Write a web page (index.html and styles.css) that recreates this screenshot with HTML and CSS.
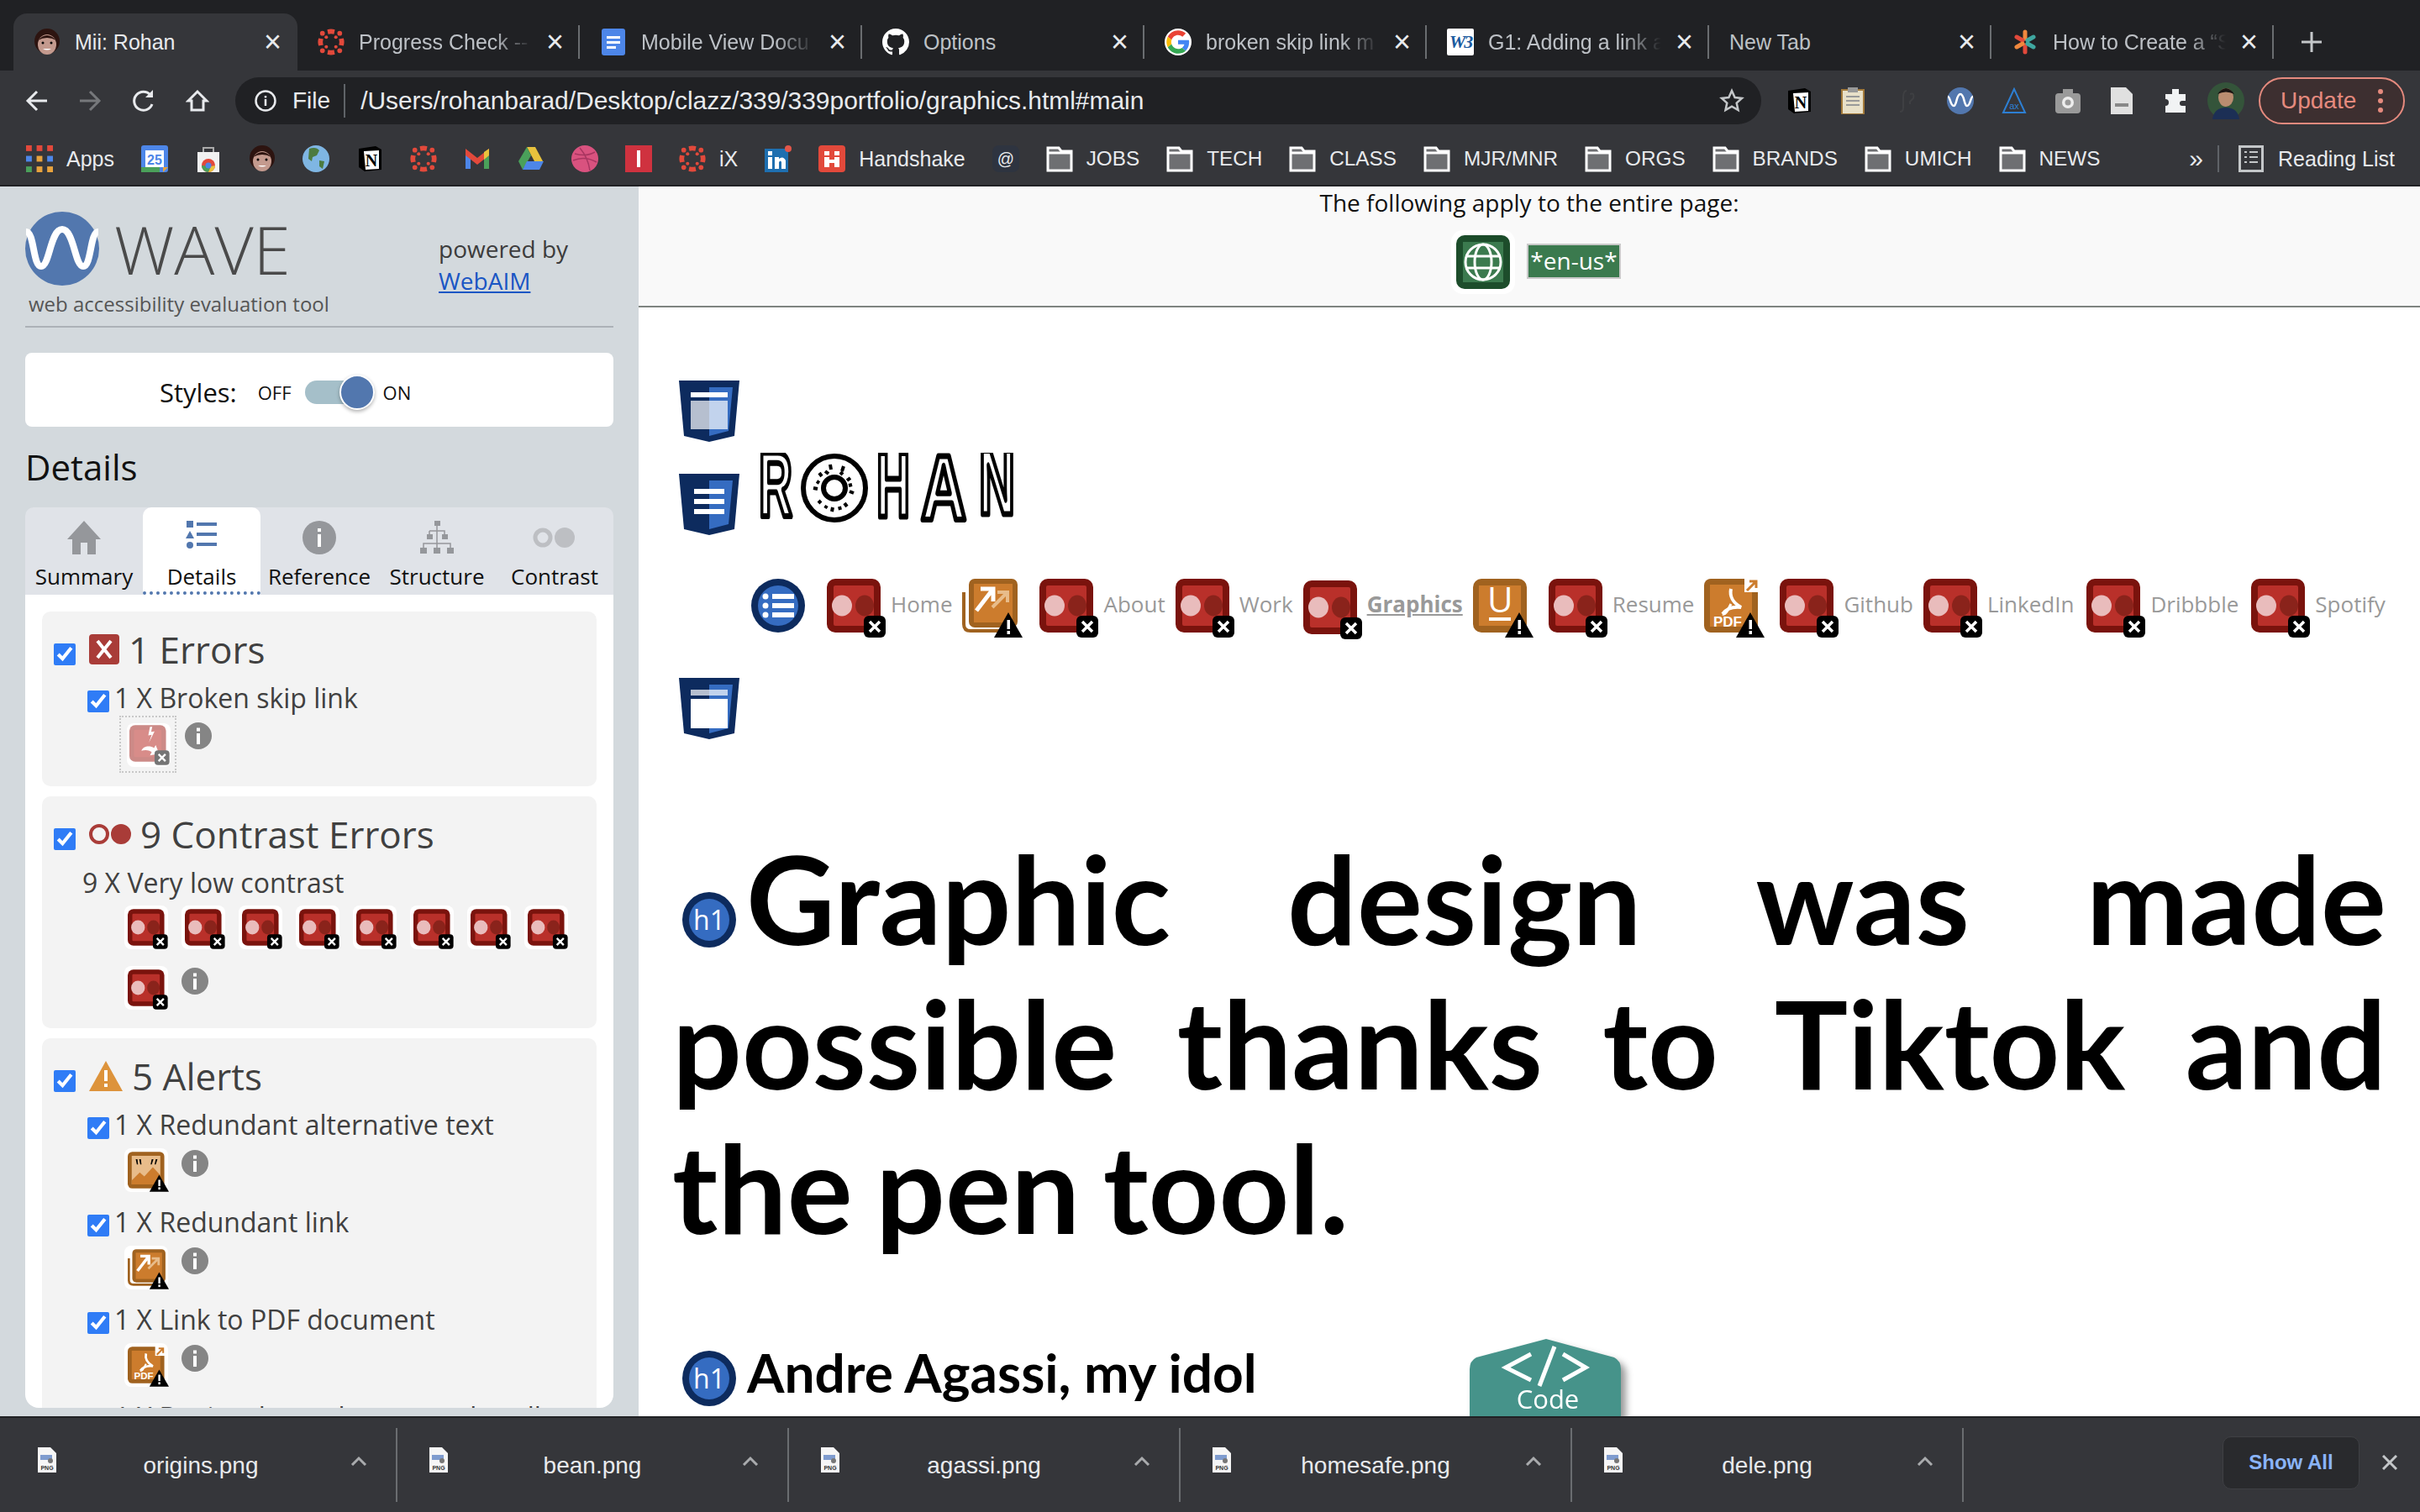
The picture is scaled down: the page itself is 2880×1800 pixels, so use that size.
FILE: index.html
```html
<!DOCTYPE html>
<html lang="en">
<head>
    <meta charset="UTF-8">
    <title>Mii: Rohan</title>
    <link rel="stylesheet" href="styles.css">
</head>
<body>
<svg class="defs" width="0" height="0">
    <defs>
        <g id="b-x"><rect x="44" y="44" width="26" height="26" rx="6" fill="#000"/><path d="M51 51l12 12M63 51L51 63" stroke="#fff" stroke-width="3.5"/></g>
        <g id="b-warn"><path d="M55 40l17 30H38z" fill="#000"/><rect x="53.500" y="49" width="3.500" height="11" fill="#fff"/><rect x="53.500" y="62" width="3.500" height="4" fill="#fff"/></g>
        <symbol id="i-contrast" viewBox="0 0 72 70">
            <rect width="64" height="64" rx="10" fill="#7a130d"/><rect x="8" y="8" width="48" height="48" rx="2" fill="#b9302a"/>
            <ellipse cx="18" cy="32" rx="12" ry="12.500" fill="#e9bcbc"/><ellipse cx="45" cy="32" rx="11" ry="12.500" fill="#8a231b"/>
            <use href="#b-x"/>
        </symbol>
        <symbol id="i-broken" viewBox="0 0 72 70">
            <g opacity=".55"><rect width="64" height="64" rx="10" fill="#a32b26"/><rect x="8" y="8" width="48" height="48" rx="2" fill="#b9302a"/></g>
            <path d="M52 50L36 53l3-6c-6-4-12-4-18-2 3-8 14-10 22-5l3-5z" fill="#fff"/><path d="M36 3l-3 15 6-1-5 14 10-20-6 1 2-9z" fill="#fff"/>
            <rect x="44" y="44" width="26" height="26" rx="6" fill="#757575"/><path d="M51 51l12 12M63 51L51 63" stroke="#fff" stroke-width="3.500"/>
        </symbol>
        <symbol id="i-redundant" viewBox="0 0 72 70">
            <path d="M2 16v38q0 8 8 8h40" fill="none" stroke="#a0621f" stroke-width="4"/>
            <rect x="8" width="58" height="58" rx="7" fill="#a0621f"/><rect x="14" y="6" width="46" height="46" fill="#cc7c2d"/>
            <path d="M36 34l18-18M42 16h12v12" fill="none" stroke="#e8bc8a" stroke-width="4"/>
            <path d="M17 38l20-26M22 12h15v15" fill="none" stroke="#fff" stroke-width="5"/>
            <use href="#b-warn"/>
        </symbol>
        <symbol id="i-alt" viewBox="0 0 72 70">
            <rect width="64" height="64" rx="8" fill="#a0621f"/><rect x="7" y="7" width="50" height="50" fill="#e8bc8a"/>
            <path d="M7 50l14-14 8 7 15-16 13 14v16H7z" fill="#cc7c2d"/>
            <path d="M14 13l2 9 2 0-1-9zm6 0l2 9 2 0-1-9zm22 0l-2 9 2 0 3-9zm7 0l-2 9 2 0 3-9z" fill="#000"/>
            <use href="#b-warn"/>
        </symbol>
        <symbol id="i-pdf" viewBox="0 0 72 70">
            <rect width="64" height="64" rx="8" fill="#a0621f"/><rect x="7" y="7" width="50" height="50" fill="#cc7c2d"/>
            <path d="M32 12c-2 9 3 17 12 22-9-1-17 1-22 8" fill="none" stroke="#fff" stroke-width="4"/><path d="M22 42c3 1 5-2 10-12" fill="none" stroke="#fff" stroke-width="3"/>
            <text class="icon-pdf" x="11" y="57">PDF</text>
            <rect x="48" y="-2" width="18" height="18" fill="#fff"/><path d="M51 14l11-11M54 3h8v8" fill="none" stroke="#cc7c2d" stroke-width="3"/>
            <use href="#b-warn"/>
        </symbol>
        <symbol id="i-u" viewBox="0 0 72 70">
            <rect width="64" height="64" rx="10" fill="#a0621f"/><rect x="7" y="8" width="50" height="48" fill="#cc7c2d"/>
            <text class="icon-u" x="17" y="40">U</text><rect x="19" y="46" width="26" height="4" fill="#fff"/>
            <use href="#b-warn"/>
        </symbol>
        <symbol id="i-lang" viewBox="0 0 64 64">
            <rect width="64" height="64" rx="10" fill="#1d4d2b"/><rect x="8" y="8" width="48" height="48" fill="#3b7a4e"/>
            <g fill="none" stroke="#fff" stroke-width="3"><circle cx="32" cy="32" r="21"/><ellipse cx="32" cy="32" rx="10" ry="21"/><path d="M11 25h42M11 39h42"/></g>
        </symbol>
        <symbol id="i-list" viewBox="0 0 64 64">
            <circle cx="32" cy="32" r="32" fill="#0d2b5e"/><circle cx="32" cy="32" r="24" fill="#356cc1"/>
            <path d="M25 18h26v6H25zM25 29h26v6H25zM25 40h26v6H25z" fill="#fff"/><circle cx="17" cy="21" r="3.500" fill="#fff"/><circle cx="17" cy="32" r="3.500" fill="#fff"/><circle cx="17" cy="43" r="3.500" fill="#fff"/>
        </symbol>
        <symbol id="i-h1" viewBox="0 0 64 66">
            <ellipse cx="32" cy="33" rx="32" ry="33" fill="#0d2b5e"/><ellipse cx="32" cy="33" rx="24" ry="25" fill="#356cc1"/>
            <text class="icon-h1" x="32" y="45">h1</text>
        </symbol>
        <g id="shield"><path d="M0 0h72l-6 66-30 7-30-7z" fill="#0d2b5e"/><path d="M36 8h28l-5 52-23 6z" fill="#356cc1"/></g>
        <symbol id="i-header" viewBox="0 0 72 73"><use href="#shield"/><rect x="14" y="14" width="44" height="6" fill="#fff"/><rect x="14" y="24" width="44" height="34" fill="#fff" opacity=".7"/></symbol>
        <symbol id="i-nav" viewBox="0 0 72 73"><use href="#shield"/><path d="M18 18h36v6H18zM18 30h36v6H18zM18 42h36v6H18z" fill="#fff"/></symbol>
        <symbol id="i-main" viewBox="0 0 72 73"><use href="#shield"/><rect x="14" y="14" width="44" height="7" fill="#fff" opacity=".7"/><rect x="14" y="25" width="44" height="35" fill="#fff"/></symbol>
        <symbol id="i-info" viewBox="0 0 32 32"><circle cx="16" cy="16" r="16" fill="#858585"/><rect x="14" y="13" width="4" height="13" fill="#fff"/><rect x="14" y="6.500" width="4" height="4" fill="#fff"/></symbol>
        <symbol id="i-mii" viewBox="0 0 32 32"><ellipse cx="16" cy="15" rx="15" ry="15" fill="#2d1410"/><ellipse cx="16" cy="19" rx="11" ry="12" fill="#c49a8e"/><path d="M5 14q11-12 22 0-11-6-22 0z" fill="#2d1410"/><circle cx="11" cy="17" r="1.500" fill="#000"/><circle cx="21" cy="17" r="1.500" fill="#000"/><path d="M11 24q5 3 10 0z" fill="#fff"/></symbol>
        <symbol id="i-canvas" viewBox="2 2 28 28"><g fill="#e2493b"><path d="M12 3a13 13 0 0 1 8 0l-1 5a8 8 0 0 0-6 0zM12 29a13 13 0 0 0 8 0l-1-5a8 8 0 0 1-6 0zM3 12a13 13 0 0 0 0 8l5-1a8 8 0 0 1 0-6zM29 12a13 13 0 0 1 0 8l-5-1a8 8 0 0 0 0-6z"/><circle cx="7" cy="7" r="2.500"/><circle cx="25" cy="7" r="2.500"/><circle cx="7" cy="25" r="2.500"/><circle cx="25" cy="25" r="2.500"/><circle cx="11" cy="11" r="1.800"/><circle cx="21" cy="11" r="1.800"/><circle cx="11" cy="21" r="1.800"/><circle cx="21" cy="21" r="1.800"/></g></symbol>
        <symbol id="i-docs" viewBox="0 0 32 32"><rect x="2" width="28" height="32" rx="3" fill="#4d86e8"/><path d="M8 9h16v3H8zM8 15h16v3H8zM8 21h11v3H8z" fill="#fff"/></symbol>
        <symbol id="i-github" viewBox="0 0 16 16"><path fill="#fff" d="M8 0C3.580 0 0 3.580 0 8c0 3.540 2.290 6.530 5.470 7.590.4.070.55-.17.55-.38 0-.19-.01-.82-.01-1.490-2.010.37-2.530-.49-2.690-.94-.09-.23-.48-.94-.82-1.130-.28-.15-.68-.52-.01-.53.63-.01 1.080.58 1.230.82.720 1.210 1.870.87 2.330.66.070-.52.280-.87.510-1.070-1.780-.2-3.640-.89-3.640-3.950 0-.87.310-1.590.82-2.150-.08-.2-.36-1.020.08-2.120 0 0 .67-.21 2.200.82.640-.18 1.320-.27 2-.27.680 0 1.360.09 2 .27 1.530-1.040 2.200-.82 2.200-.82.44 1.100.16 1.920.08 2.120.51.56.82 1.270.82 2.150 0 3.070-1.870 3.750-3.650 3.950.29.25.54.73.54 1.480 0 1.070-.01 1.930-.01 2.200 0 .21.15.46.55.38A8.013 8.013 0 0016 8c0-4.420-3.580-8-8-8z"/></symbol>
        <symbol id="i-google" viewBox="-4 -4 56 56"><circle cx="24" cy="24" r="28" fill="#fff"/><path fill="#EA4335" d="M24 9.500c3.540 0 6.710 1.220 9.210 3.600l6.850-6.850C35.900 2.380 30.470 0 24 0 14.620 0 6.510 5.380 2.560 13.220l7.980 6.190C12.430 13.720 17.740 9.500 24 9.500z"/><path fill="#4285F4" d="M46.980 24.550c0-1.570-.15-3.090-.38-4.550H24v9.020h12.940c-.58 2.960-2.260 5.480-4.780 7.180l7.730 6c4.510-4.180 7.090-10.360 7.090-17.650z"/><path fill="#FBBC05" d="M10.530 28.590c-.48-1.450-.76-2.990-.76-4.590s.27-3.140.76-4.590l-7.980-6.190C.92 16.460 0 20.120 0 24c0 3.880.92 7.540 2.560 10.780l7.970-6.190z"/><path fill="#34A853" d="M24 48c6.480 0 11.930-2.130 15.890-5.810l-7.730-6c-2.150 1.450-4.920 2.300-8.160 2.300-6.260 0-11.570-4.220-13.470-9.910l-7.980 6.190C6.510 42.620 14.620 48 24 48z"/></symbol>
        <symbol id="i-star" viewBox="0 0 32 32"><g stroke-width="5" stroke-linecap="round" fill="none"><path d="M16 4v8" stroke="#f0883e"/><path d="M16 20v8" stroke="#e2493b"/><path d="M6 10l7 4" stroke="#e2493b"/><path d="M26 10l-7 4" stroke="#3fa7a0"/><path d="M6 22l7-4" stroke="#f0883e"/><path d="M26 22l-7-4" stroke="#3fa7a0"/></g></symbol>
        <symbol id="i-notion" viewBox="0 0 32 32"><path d="M3 4l20-3 7 4v24l-20 2-7-5z" fill="#000"/><path d="M9 7l18-1v22l-16 1z" fill="#fff"/><text class="icon-notion" x="18" y="25">N</text></symbol>
        <symbol id="i-folder" viewBox="0 0 32 32"><path d="M2 3h13l3 4h12v23H2z" fill="#6e6f72" stroke="#fff" stroke-width="3"/><path d="M2 9h28" stroke="#fff" stroke-width="3"/></symbol>
        <symbol id="i-file" viewBox="0 0 22 30"><path d="M0 0h15l7 7v23H0z" fill="#f6f6f6"/><rect x="3" y="9" width="14" height="6" fill="#7f9ccf"/><circle cx="15" cy="16" r="3" fill="#777"/><text class="icon-png" x="11" y="27">PNG</text></symbol>
    </defs>
</svg>

<div class="browser">
    <div class="tabstrip">
        <div class="tab tab-active"><svg class="fav"><use href="#i-mii"/></svg><span class="tab-title">Mii: Rohan</span><span class="tab-x">×</span></div>
        <div class="tab"><svg class="fav"><use href="#i-canvas"/></svg><span class="tab-title fade">Progress Check --</span><span class="tab-x">×</span></div>
        <div class="tab"><svg class="fav"><use href="#i-docs"/></svg><span class="tab-title fade">Mobile View Docu</span><span class="tab-x">×</span></div>
        <div class="tab"><svg class="fav"><use href="#i-github"/></svg><span class="tab-title">Options</span><span class="tab-x">×</span></div>
        <div class="tab"><svg class="fav"><use href="#i-google"/></svg><span class="tab-title fade">broken skip link m</span><span class="tab-x">×</span></div>
        <div class="tab"><span class="fav fav-w3">W3</span><span class="tab-title fade">G1: Adding a link a</span><span class="tab-x">×</span></div>
        <div class="tab"><span class="tab-title">New Tab</span><span class="tab-x">×</span></div>
        <div class="tab"><svg class="fav"><use href="#i-star"/></svg><span class="tab-title fade">How to Create a “S</span><span class="tab-x">×</span></div>
        <svg class="new-tab" width="24" height="24" viewBox="0 0 24 24"><path d="M12 0v24M0 12h24" stroke="#c4c7c9" stroke-width="3"/></svg>
    </div>

    <div class="toolbar">
        <div class="nav-btns">
            <svg width="28" height="28" viewBox="0 0 28 28"><path d="M26 14H4M14 3L3 14l11 11" fill="none" stroke="#e8eaed" stroke-width="3"/></svg>
            <svg width="28" height="28" viewBox="0 0 28 28"><path d="M2 14h22M14 3l11 11-11 11" fill="none" stroke="#76787b" stroke-width="3"/></svg>
            <svg width="30" height="30" viewBox="0 0 30 30"><path d="M25 19a11 11 0 1 1-2-11" fill="none" stroke="#e8eaed" stroke-width="3"/><path d="M26 2v9h-9z" fill="#e8eaed"/></svg>
            <svg width="28" height="28" viewBox="0 0 28 28"><path d="M14 3L3 14h4v11h14V14h4z" fill="none" stroke="#e8eaed" stroke-width="3"/></svg>
        </div>
        <div class="omnibox">
            <svg width="26" height="26" viewBox="0 0 26 26"><circle cx="13" cy="13" r="11.500" fill="none" stroke="#e8eaed" stroke-width="2.500"/><path d="M13 11v8M13 7v2.500" stroke="#e8eaed" stroke-width="2.500"/></svg>
            <span class="omni-scheme">File</span>
            <span class="omni-url">/Users/rohanbarad/Desktop/clazz/339/339portfolio/graphics.html#main</span>
            <svg class="omni-star" width="30" height="30" viewBox="0 0 30 30"><path d="M15 3l3.600 8 8.400.9-6.300 5.700 1.800 8.400-7.500-4.300L7.500 26l1.800-8.400L3 11.900l8.400-.9z" fill="none" stroke="#c4c7c9" stroke-width="2.500"/></svg>
        </div>
        <div class="extensions">
            <svg class="ext"><use href="#i-notion"/></svg>
            <svg class="ext" viewBox="0 0 32 32"><rect x="3" y="3" width="26" height="29" fill="#e8e0c8" stroke="#a37a3a" stroke-width="2"/><rect x="10" y="0" width="12" height="6" fill="#999"/><path d="M8 11h16M8 16h16M8 21h16" stroke="#999" stroke-width="2"/></svg>
            <svg class="ext" viewBox="0 0 32 32"><path d="M16 4q-4 0-4 8v12q0 5-4 5" fill="none" stroke="#3f4043" stroke-width="2"/><path d="M20 8q6-2 4 5l-4 4v3" fill="none" stroke="#3f4043" stroke-width="2"/></svg>
            <svg class="ext" viewBox="0 0 32 32"><circle cx="16" cy="16" r="16" fill="#5277ae"/><path d="M1 11c3 0 3 11 7 11s3-14 8-14 4 14 8 14 4-11 7-11" fill="none" stroke="#fff" stroke-width="2.500"/></svg>
            <svg class="ext" viewBox="0 0 32 32"><path d="M16 2L3 30h26z" fill="none" stroke="#2d7fd3" stroke-width="2"/><text class="icon-ax" x="16" y="26">ax</text></svg>
            <svg class="ext" viewBox="0 0 32 32"><rect x="1" y="7" width="30" height="24" rx="4" fill="#9a9a9a"/><rect x="10" y="2" width="12" height="7" fill="#9a9a9a"/><circle cx="16" cy="18" r="7" fill="#eee"/><circle cx="16" cy="18" r="3.500" fill="#9a9a9a"/></svg>
            <svg class="ext" viewBox="0 0 32 32"><path d="M3 0h18l8 8v24H3z" fill="#e0e0e0"/><rect x="8" y="19" width="16" height="4" fill="#888"/></svg>
            <svg class="ext" viewBox="0 0 32 32"><path d="M12 2h8v6h8v8h-4a3 3 0 1 0 0 6h4v8H4V22a4 4 0 1 0 0-8V8h8z" fill="#f1f3f4"/></svg>
            <svg class="avatar" viewBox="0 0 44 44"><circle cx="22" cy="22" r="22" fill="#34543a"/><path d="M6 44q2-14 16-14t16 14z" fill="#1c2f55"/><ellipse cx="22" cy="18" rx="9" ry="11" fill="#b98c70"/><path d="M12 14q10-14 20 0-10-5-20 0z" fill="#1a1412"/></svg>
        </div>
        <div class="update-pill"><span>Update</span><svg width="6" height="28" viewBox="0 0 6 28"><circle cx="3" cy="3" r="3" fill="#e58a7e"/><circle cx="3" cy="14" r="3" fill="#e58a7e"/><circle cx="3" cy="25" r="3" fill="#e58a7e"/></svg></div>
    </div>

    <div class="bookmarks">
        <span class="bm"><svg class="bm-ic" viewBox="0 0 28 28"><g fill="#e2493b"><rect width="6" height="6"/><rect x="11" width="6" height="6"/><rect x="22" width="6" height="6"/></g><g fill="#4d86e8"><rect y="11" width="6" height="6"/><rect x="11" y="11" width="6" height="6" fill="#e8a33d"/><rect x="22" y="11" width="6" height="6"/></g><g fill="#4aa05a"><rect y="22" width="6" height="6"/><rect x="11" y="22" width="6" height="6" fill="#e8a33d"/><rect x="22" y="22" width="6" height="6" fill="#e8a33d"/></g></svg>Apps</span>
        <svg class="bm-ic" viewBox="0 0 32 32"><rect width="32" height="32" rx="3" fill="#4d86e8"/><rect x="5" y="6" width="22" height="20" fill="#fff"/><rect y="26" width="22" height="6" fill="#4aa05a"/><path d="M26 26h6l-6 6z" fill="#e8a33d"/><text class="icon-cal" x="16" y="23">25</text></svg>
        <svg class="bm-ic" viewBox="0 0 32 32"><rect x="3" y="8" width="26" height="24" fill="#f1f1f1"/><path d="M10 8V3h12v5" fill="none" stroke="#aaa" stroke-width="2"/><circle cx="16" cy="24" r="8" fill="#e2493b"/><path d="M8 24a8 8 0 0 0 8 8l3-7z" fill="#4aa05a"/><path d="M24 24a8 8 0 0 1-8 8l3-7z" fill="#e8c23d"/><circle cx="16" cy="24" r="3.500" fill="#4d86e8"/></svg>
        <svg class="bm-ic"><use href="#i-mii"/></svg>
        <svg class="bm-ic" viewBox="0 0 32 32"><circle cx="16" cy="16" r="16" fill="#7fb6e3"/><path d="M8 4q8-3 12 2l-3 6-5 2-1 5-4-3zM20 18l6 1-2 9-4-3z" fill="#4c7b3f"/></svg>
        <svg class="bm-ic"><use href="#i-notion"/></svg>
        <svg class="bm-ic"><use href="#i-canvas"/></svg>
        <svg class="bm-ic" viewBox="0 0 32 32"><path d="M2 8v20h6V14z" fill="#4d86e8"/><path d="M30 8v20h-6V14z" fill="#4aa05a"/><path d="M2 4l14 11L30 4v8L16 23 2 12z" fill="#e2493b"/><path d="M24 8l6-4v8l-6 5z" fill="#e8c23d"/></svg>
        <svg class="bm-ic" viewBox="0 0 32 32"><path d="M11 2h10l9 17H20z" fill="#e8c23d"/><path d="M11 2L1 19l5 10 10-17z" fill="#4aa05a"/><path d="M6 29h20l5-10H11z" fill="#4d86e8"/></svg>
        <svg class="bm-ic" viewBox="0 0 32 32"><circle cx="16" cy="16" r="16" fill="#d9527f"/><path d="M4 10q14 4 24-2M2 18q14-6 28 2M10 3q10 12 12 27" fill="none" stroke="#a83560" stroke-width="1.500"/></svg>
        <svg class="bm-ic" viewBox="0 0 32 32"><rect width="32" height="32" fill="#cf323f"/><rect x="14" y="6" width="4" height="20" fill="#fff"/></svg>
        <span class="bm"><svg class="bm-ic"><use href="#i-canvas"/></svg>iX</span>
        <svg class="bm-ic" viewBox="0 0 32 32"><rect y="4" width="28" height="28" fill="#1e6fb0"/><circle cx="28" cy="4" r="4" fill="#e2564a"/><rect x="4" y="14" width="5" height="14" fill="#fff"/><rect x="4" y="7" width="5" height="5" fill="#fff"/><path d="M12 14h5v2q5-4 8 2v10h-5v-8q-1-3-3 0v8h-5z" fill="#fff"/></svg>
        <span class="bm"><svg class="bm-ic" viewBox="0 0 32 32"><rect width="32" height="32" rx="4" fill="#e2493b"/><path d="M7 7h6v5H7zM7 14h6v12H7zM19 7h6v5h-6zM19 14h6v12h-6zM13 17h6v4h-6z" fill="#fff"/></svg>Handshake</span>
        <svg class="bm-ic" viewBox="0 0 32 32"><rect width="32" height="32" rx="8" fill="#2e3440"/><text class="icon-at" x="16" y="23">@</text></svg>
        <span class="bm bm-folder"><svg class="bm-ic"><use href="#i-folder"/></svg>JOBS</span>
        <span class="bm bm-folder"><svg class="bm-ic"><use href="#i-folder"/></svg>TECH</span>
        <span class="bm bm-folder"><svg class="bm-ic"><use href="#i-folder"/></svg>CLASS</span>
        <span class="bm bm-folder"><svg class="bm-ic"><use href="#i-folder"/></svg>MJR/MNR</span>
        <span class="bm bm-folder"><svg class="bm-ic"><use href="#i-folder"/></svg>ORGS</span>
        <span class="bm bm-folder"><svg class="bm-ic"><use href="#i-folder"/></svg>BRANDS</span>
        <span class="bm bm-folder"><svg class="bm-ic"><use href="#i-folder"/></svg>UMICH</span>
        <span class="bm bm-folder"><svg class="bm-ic"><use href="#i-folder"/></svg>NEWS</span>
        <span class="bm-more">»</span>
        <span class="bm bm-reading"><svg class="bm-ic" viewBox="0 0 30 32"><rect x="1.500" y="1.500" width="27" height="29" fill="none" stroke="#c4c7c9" stroke-width="3"/><path d="M7 8h3M13 8h10M7 14h3M13 14h10M7 20h3M13 20h10" stroke="#c4c7c9" stroke-width="2"/></svg>Reading List</span>
    </div>

    <div class="page">
        <aside class="wave">
            <header class="wave-head">
                <div class="wave-brand">
                    <div class="wave-logo">
                        <svg width="88" height="88" viewBox="0 0 88 88"><circle cx="44" cy="44" r="44" fill="#5277ae"/><path d="M1 24c10 0 8 41 18 41s11-44 25-44 15 44 25 44 8-41 18-41" fill="none" stroke="#fff" stroke-width="8"/></svg>
                        <span class="wave-name">WAVE</span>
                    </div>
                    <div class="wave-tag">web accessibility evaluation tool</div>
                </div>
                <div class="wave-powered">powered by<br><a href="#">WebAIM</a></div>
            </header>

            <div class="styles-card">
                <span class="styles-label">Styles:</span>
                <span class="styles-off">OFF</span>
                <span class="switch"><span class="switch-knob"></span></span>
                <span class="styles-on">ON</span>
            </div>

            <h2 class="details-title">Details</h2>

            <div class="wave-tabs">
                <div class="wave-tab">
                    <svg class="wave-tab-ic" viewBox="0 0 40 40"><path d="M20 0L0 22h6v18h10V26h8v14h10V22h6z" fill="#95979b"/></svg>Summary
                </div>
                <div class="wave-tab wave-tab-active">
                    <svg class="wave-tab-ic" viewBox="0 0 40 40"><g fill="#5277ae"><rect x="2" y="0" width="8" height="8"/><path d="M6 12l5 9H1z"/><circle cx="6" cy="29" r="4"/><rect x="14" y="2" width="24" height="4"/><rect x="14" y="14" width="24" height="4"/><rect x="14" y="26" width="24" height="4"/></g></svg>Details
                </div>
                <div class="wave-tab">
                    <svg class="wave-tab-ic" viewBox="0 0 40 40"><circle cx="20" cy="20" r="20" fill="#95979b"/><rect x="18" y="16" width="4" height="15" fill="#fff"/><rect x="18" y="9" width="4" height="4" fill="#fff"/></svg>Reference
                </div>
                <div class="wave-tab">
                    <svg class="wave-tab-ic" viewBox="0 0 40 40"><g fill="#95979b"><rect x="17" y="0" width="7" height="6"/><rect x="8" y="16" width="7" height="6"/><rect x="26" y="16" width="7" height="6"/><rect x="0" y="32" width="8" height="7"/><rect x="16" y="32" width="8" height="7"/><rect x="32" y="32" width="8" height="7"/></g><path d="M20 6v26M11 12h18v4M11 12v4M4 32v-5h32v5" fill="none" stroke="#95979b" stroke-width="1.500"/></svg>Structure
                </div>
                <div class="wave-tab">
                    <svg class="wave-tab-ic wave-tab-ic-wide" viewBox="0 0 52 40"><circle cx="12" cy="20" r="9" fill="none" stroke="#bdbfc3" stroke-width="5"/><circle cx="38" cy="20" r="12" fill="#bdbfc3"/></svg>Contrast
                </div>
            </div>

            <div class="wave-panel">
                <section class="group">
                    <h3 class="group-head"><input type="checkbox" checked>
                        <svg class="head-ic" width="36" height="36" viewBox="0 0 36 36"><rect width="36" height="36" rx="4" fill="#a93c38"/><path d="M10 8l16 20M26 8L10 28" stroke="#fff" stroke-width="4"/></svg>1 Errors</h3>
                    <div class="row"><input type="checkbox" checked>1 X Broken skip link</div>
                    <div class="icons icons-first">
                        <span class="dotted"><span class="w-ic"><svg><use href="#i-broken"/></svg></span></span>
                        <svg class="info"><use href="#i-info"/></svg>
                    </div>
                </section>

                <section class="group group-contrast">
                    <h3 class="group-head"><input type="checkbox" checked>
                        <svg class="head-ic" width="50" height="36" viewBox="0 0 50 36"><circle cx="12" cy="18" r="10" fill="none" stroke="#a93c38" stroke-width="4"/><circle cx="38" cy="18" r="12" fill="#a93c38"/></svg>9 Contrast Errors</h3>
                    <div class="row row-plain">9 X Very low contrast</div>
                    <div class="icons">
                        <span class="w-ic"><svg><use href="#i-contrast"/></svg></span>
                        <span class="w-ic"><svg><use href="#i-contrast"/></svg></span>
                        <span class="w-ic"><svg><use href="#i-contrast"/></svg></span>
                        <span class="w-ic"><svg><use href="#i-contrast"/></svg></span>
                        <span class="w-ic"><svg><use href="#i-contrast"/></svg></span>
                        <span class="w-ic"><svg><use href="#i-contrast"/></svg></span>
                        <span class="w-ic"><svg><use href="#i-contrast"/></svg></span>
                        <span class="w-ic"><svg><use href="#i-contrast"/></svg></span>
                        <span class="w-ic"><svg><use href="#i-contrast"/></svg></span>
                        <svg class="info"><use href="#i-info"/></svg>
                    </div>
                </section>

                <section class="group">
                    <h3 class="group-head"><input type="checkbox" checked>
                        <svg class="head-ic" width="40" height="36" viewBox="0 0 40 36"><path d="M20 0l20 36H0z" fill="#dd933b"/><rect x="18" y="11" width="4" height="13" fill="#fff"/><rect x="18" y="27" width="4" height="4" fill="#fff"/></svg>5 Alerts</h3>
                    <div class="row"><input type="checkbox" checked>1 X Redundant alternative text</div>
                    <div class="icons"><span class="w-ic"><svg><use href="#i-alt"/></svg></span><svg class="info"><use href="#i-info"/></svg></div>
                    <div class="row"><input type="checkbox" checked>1 X Redundant link</div>
                    <div class="icons"><span class="w-ic"><svg><use href="#i-redundant"/></svg></span><svg class="info"><use href="#i-info"/></svg></div>
                    <div class="row"><input type="checkbox" checked>1 X Link to PDF document</div>
                    <div class="icons"><span class="w-ic"><svg><use href="#i-pdf"/></svg></span><svg class="info"><use href="#i-info"/></svg></div>
                    <div class="row"><input type="checkbox" checked>1 X Device dependent event handler</div>
                </section>
            </div>
        </aside>

        <main class="report">
            <div class="page-notes">
                <div class="page-notes-text">The following apply to the entire page:</div>
                <div class="page-notes-items">
                    <span class="lang-ic"><svg width="64" height="64"><use href="#i-lang"/></svg></span>
                    <span class="lang-tag">*en-us*</span>
                </div>
            </div>

            <div class="content">
                <svg class="shield"><use href="#i-header"/></svg>
                <div class="brand-row">
                    <svg class="shield brand-shield"><use href="#i-nav"/></svg>
                    <svg class="rohan" width="313" height="84" viewBox="0 0 313 84">
                        <text class="rohan-l" x="3" y="76" textLength="40" lengthAdjust="spacingAndGlyphs">R</text>
                        <ellipse cx="93" cy="42" rx="37" ry="38" fill="#fff" stroke="#000" stroke-width="6"/>
                        <circle cx="93" cy="42" r="13" fill="#fff" stroke="#000" stroke-width="6"/>
                        <path d="M75 24l3 4M88 14l1 6M104 16l-2 6M112 30l-4 3M116 48l-5-2M108 64l-3-4M90 70l1-5M74 60l3-3M68 42l5 1M82 22l4 3M100 26l3-3M72 34l3 2M114 38l-4 1M82 66l2-3M100 68l-1-4" stroke="#000" stroke-width="4"/>
                        <text class="rohan-l" x="143" y="76" textLength="40" lengthAdjust="spacingAndGlyphs">H</text>
                        <text class="rohan-l" x="196" y="79" textLength="54" lengthAdjust="spacingAndGlyphs">A</text>
                        <text class="rohan-l" x="265" y="73" textLength="43" lengthAdjust="spacingAndGlyphs">N</text>
                    </svg>
                </div>

                <nav class="site-nav">
                    <svg class="nav-list"><use href="#i-list"/></svg>
                    <svg class="w"><use href="#i-contrast"/></svg><a>Home</a>
                    <svg class="w w-warn w-redundant"><use href="#i-redundant"/></svg>
                    <svg class="w"><use href="#i-contrast"/></svg><a>About</a>
                    <svg class="w"><use href="#i-contrast"/></svg><a>Work</a>
                    <svg class="w w-current"><use href="#i-contrast"/></svg><a class="current">Graphics</a>
                    <svg class="w w-warn"><use href="#i-u"/></svg>
                    <svg class="w"><use href="#i-contrast"/></svg><a>Resume</a>
                    <svg class="w w-warn"><use href="#i-pdf"/></svg>
                    <svg class="w"><use href="#i-contrast"/></svg><a>Github</a>
                    <svg class="w"><use href="#i-contrast"/></svg><a>LinkedIn</a>
                    <svg class="w w-wide"><use href="#i-contrast"/></svg><a>Dribbble</a>
                    <svg class="w w-wide"><use href="#i-contrast"/></svg><a>Spotify</a>
                </nav>

                <svg class="shield main-shield"><use href="#i-main"/></svg>

                <h1 class="headline"><svg class="h1-ic"><use href="#i-h1"/></svg>Graphic design was made possible thanks to Tiktok and the pen tool.</h1>
                <h2 class="subhead"><svg class="h1-ic h1-ic-sub"><use href="#i-h1"/></svg>Andre Agassi, my idol</h2>
            </div>

            <svg class="code-tag" width="180" height="92" viewBox="0 0 180 92">
                <path d="M0 92V36q0-10 8-14L91 0l81 22q8 4 8 14v56z" fill="#46938a"/>
                <path d="M73 18L43 34l30 15M111 18l27 16-27 15" fill="none" stroke="#fff" stroke-width="5"/>
                <path d="M101 9L83 56" stroke="#fff" stroke-width="5"/>
                <text class="code-text" x="93" y="83">Code</text>
            </svg>
        </main>
    </div>

    <div class="downloads">
        <div class="dl"><svg class="dl-file"><use href="#i-file"/></svg><span class="dl-name">origins.png</span><svg class="dl-chev" width="20" height="12" viewBox="0 0 20 12"><path d="M2 11l8-8 8 8" fill="none" stroke="#a9abad" stroke-width="3"/></svg></div>
        <div class="dl"><svg class="dl-file"><use href="#i-file"/></svg><span class="dl-name">bean.png</span><svg class="dl-chev" width="20" height="12" viewBox="0 0 20 12"><path d="M2 11l8-8 8 8" fill="none" stroke="#a9abad" stroke-width="3"/></svg></div>
        <div class="dl"><svg class="dl-file"><use href="#i-file"/></svg><span class="dl-name">agassi.png</span><svg class="dl-chev" width="20" height="12" viewBox="0 0 20 12"><path d="M2 11l8-8 8 8" fill="none" stroke="#a9abad" stroke-width="3"/></svg></div>
        <div class="dl"><svg class="dl-file"><use href="#i-file"/></svg><span class="dl-name">homesafe.png</span><svg class="dl-chev" width="20" height="12" viewBox="0 0 20 12"><path d="M2 11l8-8 8 8" fill="none" stroke="#a9abad" stroke-width="3"/></svg></div>
        <div class="dl"><svg class="dl-file"><use href="#i-file"/></svg><span class="dl-name">dele.png</span><svg class="dl-chev" width="20" height="12" viewBox="0 0 20 12"><path d="M2 11l8-8 8 8" fill="none" stroke="#a9abad" stroke-width="3"/></svg></div>
        <button class="show-all">Show All</button>
        <svg class="dl-close" width="18" height="18" viewBox="0 0 18 18"><path d="M1 1l16 16M17 1L1 17" stroke="#c4c7c9" stroke-width="3"/></svg>
    </div>
</div>
</body>
</html>
```

FILE: styles.css
```css
* {
    box-sizing: border-box;
}
body {
    margin: 0;
    background: #202124;
    overflow: hidden;
    font-family: "Liberation Sans", Arial, sans-serif;
}
.defs {
    display: block;
    height: 0;
}
.browser {
    width: 2880px;
    height: 1800px;
    display: flex;
    flex-direction: column;
    overflow: hidden;
}

/* tab strip */
.tabstrip {
    height: 84px;
    padding: 16px 0 0 16px;
    display: flex;
    align-items: stretch;
    background: #202124;
    flex: none;
}
.tab {
    width: 336px;
    padding: 0 22px 0 24px;
    display: flex;
    align-items: center;
    gap: 17px;
    color: #bdc1c6;
    font-size: 25px;
    background: linear-gradient(#6a6d70, #6a6d70) right center / 2px 40px no-repeat;
    flex: none;
}
.tab-active {
    width: 338px;
    background: #35363a;
    color: #e8eaed;
    border-radius: 16px 16px 0 0;
}
.fav {
    width: 32px;
    height: 32px;
    flex: none;
}
.fav-w3 {
    background: #fff;
    color: #1a5a9e;
    font: italic 700 22px/32px "Liberation Serif", serif;
    text-align: center;
    letter-spacing: -2px;
    border-radius: 2px;
}
.tab-title {
    flex: 1;
    min-width: 0;
    white-space: nowrap;
    overflow: hidden;
}
.fade {
    -webkit-mask-image: linear-gradient(to right, #000 78%, transparent 100%);
    mask-image: linear-gradient(to right, #000 78%, transparent 100%);
}
.tab-x {
    font-size: 36px;
    line-height: 32px;
    color: #e8eaed;
    width: 18px;
    text-align: center;
}
.new-tab {
    align-self: center;
    margin: 0 0 0 33px;
}

/* toolbar */
.toolbar {
    height: 84px;
    padding-top: 8px;
    background: #35363a;
    display: flex;
    align-items: flex-start;
    flex: none;
}
.nav-btns {
    width: 280px;
    height: 56px;
    padding-left: 30px;
    display: flex;
    align-items: center;
    gap: 35px;
    flex: none;
}
.omnibox {
    width: 1816px;
    height: 56px;
    border-radius: 28px;
    background: #202124;
    padding: 0 20px 0 23px;
    display: flex;
    align-items: center;
    color: #e8eaed;
    font-size: 28px;
    flex: none;
}
.omni-scheme {
    margin-left: 19px;
    padding-right: 16px;
    border-right: 2px solid #5f6368;
    line-height: 40px;
}
.omni-url {
    margin-left: 18px;
    flex: 1;
    font-size: 30px;
    letter-spacing: -.05px;
    white-space: nowrap;
}
.extensions {
    margin-left: 29px;
    height: 56px;
    display: flex;
    align-items: center;
    gap: 32px;
    flex: none;
}
.ext {
    width: 32px;
    height: 32px;
}
.avatar {
    width: 44px;
    height: 44px;
    margin-left: -10px;
}
.update-pill {
    width: 174px;
    height: 56px;
    margin-left: 17px;
    border: 2px solid #e58a7e;
    border-radius: 28px;
    background: #3d2f30;
    color: #e58a7e;
    font-size: 28px;
    padding: 0 24px 0 24px;
    display: flex;
    align-items: center;
    justify-content: space-between;
    flex: none;
}

/* bookmarks */
.bookmarks {
    height: 54px;
    padding: 0 30px 10px 31px;
    background: #35363a;
    border-bottom: 2px solid #202124;
    display: flex;
    align-items: center;
    gap: 32px;
    color: #e8eaed;
    font-size: 25px;
    flex: none;
}
.bm {
    display: flex;
    align-items: center;
    gap: 16px;
    white-space: nowrap;
}
.bm-folder {
    font-size: 24.300px;
}
.bm-ic {
    width: 32px;
    height: 32px;
    flex: none;
}
.bm-more {
    margin: 0 -9px 0 auto;
    font-size: 30px;
}
.bm-reading {
    padding-left: 22px;
    margin-left: -6px;
    border-left: 2px solid #5f6368;
    line-height: 32px;
}

/* page area */
.page {
    flex: 1;
    min-height: 0;
    display: flex;
}

/* wave sidebar */
.wave {
    width: 760px;
    flex: none;
    padding: 30px 30px 10px;
    background: #d3d9dd;
    font-family: "Open Sans", sans-serif;
    display: flex;
    flex-direction: column;
}
.wave-head {
    height: 138px;
    border-bottom: 2px solid #acb1b7;
    display: flex;
    flex: none;
}
.wave-brand {
    width: 492px;
    flex: none;
}
.wave-logo {
    display: flex;
    align-items: center;
    gap: 18px;
    height: 88px;
}
.wave-name {
    font-size: 80px;
    font-weight: 300;
    color: #4a4a4a;
    line-height: 88px;
}
.wave-tag {
    margin: 5px 0 0 4px;
    font-size: 24px;
    line-height: 34px;
    color: #555;
    white-space: nowrap;
}
.wave-powered {
    padding-top: 25px;
    font-size: 28px;
    line-height: 38px;
    color: #3c3c3c;
}
.wave-powered a {
    color: #1a56c4;
    text-decoration: underline;
}
.styles-card {
    height: 88px;
    margin-top: 30px;
    padding: 6px 0 0 160px;
    background: #fff;
    border-radius: 8px;
    display: flex;
    align-items: center;
    color: #111;
    flex: none;
}
.styles-label {
    font-size: 31px;
}
.styles-off {
    margin-left: 25px;
    font-size: 22px;
}
.styles-on {
    margin-left: 10px;
    font-size: 22px;
}
.switch {
    width: 83px;
    height: 28px;
    margin-left: 16px;
    background: #a5bfc9;
    border-radius: 14px;
    display: flex;
    align-items: center;
    justify-content: flex-end;
}
.switch-knob {
    width: 42px;
    height: 42px;
    border-radius: 50%;
    background: #5277ae;
    border: 2px solid #fff;
    box-shadow: 0 2px 4px rgba(0, 0, 0, .3);
}
.details-title {
    margin: 0;
    height: 96px;
    font-size: 42px;
    font-weight: 400;
    line-height: 96px;
    color: #111;
    flex: none;
}
.wave-tabs {
    height: 104px;
    background: #e0e3e8;
    border-radius: 10px 10px 0 0;
    display: flex;
    flex: none;
}
.wave-tab {
    width: 140px;
    padding-top: 16px;
    display: flex;
    flex-direction: column;
    align-items: center;
    font-size: 26px;
    line-height: 40px;
    color: #111;
    white-space: nowrap;
}
.wave-tab-active {
    background: #fff;
    border-radius: 10px 10px 0 0;
    border-bottom: 4px dotted #5277ae;
}
.wave-tab-ic {
    width: 40px;
    height: 40px;
    margin-bottom: 6px;
    flex: none;
}
.wave-tab-ic-wide {
    width: 52px;
}
.wave-panel {
    flex: 1;
    min-height: 0;
    overflow: hidden;
    background: #fff;
    border-radius: 0 0 16px 16px;
    padding: 20px;
}
.group {
    padding: 22px 14px 16px;
    margin-bottom: 12px;
    background: #f3f3f3;
    border-radius: 10px;
    color: #404040;
}
.group-contrast {
    padding-bottom: 2px;
}
.group-head {
    margin: 0;
    height: 46px;
    display: flex;
    align-items: center;
    font-size: 44px;
    font-weight: 400;
    white-space: nowrap;
}
.group input {
    width: 26px;
    height: 26px;
    margin: 12px 0 0;
    accent-color: #2f7cf6;
    flex: none;
}
.head-ic {
    margin: 0 11px 0 16px;
    flex: none;
}
.row {
    height: 40px;
    margin-top: 14px;
    padding-left: 40px;
    display: flex;
    align-items: center;
    gap: 6px;
    font-size: 32px;
    white-space: nowrap;
}
.row input {
    margin-top: 10px;
}
.row-plain {
    margin-top: 14px;
    padding-left: 34px;
}
.icons {
    margin-top: 9px;
    padding-left: 84px;
    display: flex;
    flex-wrap: wrap;
    align-items: flex-start;
}
.icons + .row {
    margin-top: 15px;
}
.icons-first {
    margin-top: 2px;
    padding-left: 78px;
}
.group-contrast .icons {
    margin-top: 8px;
}
.w-ic {
    width: 52px;
    height: 52px;
    padding: 4px 0 0 4px;
    margin: 0 16px 0 0;
    background: #fff;
    border-radius: 8px;
}
.group-contrast .w-ic {
    margin-bottom: 20px;
}
.w-ic svg {
    width: 49px;
    height: 48px;
    display: block;
}
.dotted {
    width: 68px;
    height: 68px;
    padding: 7px;
    border: 2px dotted #c8c8c8;
    margin-right: 10px;
}
.dotted .w-ic {
    display: block;
    margin: 0;
    padding: 2px 0 0 3px;
}
.info {
    width: 32px;
    height: 32px;
    margin-top: 2px;
}
.icons-first .info {
    margin-top: 8px;
}

/* report pane */
.report {
    flex: 1;
    min-width: 0;
    position: relative;
    overflow: hidden;
    background: #fff;
    font-family: "Open Sans", sans-serif;
}
.page-notes {
    height: 144px;
    background: #f9f9f9;
    border-bottom: 2px solid #7e8480;
    text-align: center;
    color: #111;
}
.page-notes-text {
    font-size: 28px;
    line-height: 38px;
}
.page-notes-items {
    margin-top: 14px;
    padding-left: 16px;
    display: flex;
    justify-content: center;
    align-items: center;
    gap: 14px;
}
.lang-ic {
    width: 76px;
    height: 76px;
    padding: 6px;
    background: #fff;
    border-radius: 14px;
}
.lang-ic svg {
    display: block;
}
.lang-tag {
    height: 42px;
    padding: 0 2px;
    margin-top: -2px;
    background: #3b7a4e;
    border: 2px solid #c9c9c9;
    color: #fff;
    font-size: 28px;
    line-height: 36px;
}
.content {
    padding: 87px 40px 0;
}
.shield {
    width: 72px;
    height: 73px;
    display: block;
    margin-left: 8px;
}
.brand-row {
    margin-top: 13px;
    display: flex;
    align-items: flex-start;
}
.brand-shield {
    margin-top: 25px;
    flex: none;
}
.rohan {
    margin-left: 20px;
    flex: none;
}
.rohan-l {
    font: 700 110px "Liberation Sans", sans-serif;
    fill: #fff;
    stroke: #000;
    stroke-width: 7px;
    stroke-linejoin: round;
}
.site-nav {
    margin-top: 52px;
    height: 64px;
    padding-left: 94px;
    display: flex;
    align-items: flex-start;
    gap: 12px;
    font-size: 26px;
    line-height: 60px;
    color: #999;
    white-space: nowrap;
}
.nav-list {
    width: 64px;
    height: 64px;
    margin-right: 14px;
    flex: none;
}
.w {
    width: 72px;
    height: 70px;
    margin-right: -8px;
    flex: none;
}
.w-warn {
    margin-right: 6px;
}
.w-redundant {
    margin-right: 8px;
}
.w-wide {
    margin-left: 3px;
}
.w-current {
    margin-top: 2px;
}
.current {
    font-weight: 700;
    text-decoration: underline;
}
.main-shield {
    margin-top: 54px;
}
.headline {
    margin: 103px 0 0;
    font: 700 146px/172px Lato, sans-serif;
    word-spacing: -8px;
    color: #000;
    text-align: justify;
}
.h1-ic {
    width: 64px;
    height: 66px;
    margin: 0 12px 0 12px;
    vertical-align: -3px;
}
.subhead {
    margin: 96px 0 0;
    font: 700 64px/77px Lato, sans-serif;
    color: #000;
    white-space: nowrap;
}
.h1-ic-sub {
    margin-right: 13px;
    vertical-align: -16px;
}
.code-tag {
    position: absolute;
    left: 989px;
    top: 1372px;
    overflow: visible;
    filter: drop-shadow(6px 6px 4px rgba(0, 0, 0, .4));
}

/* text inside drawn icons */
.icon-pdf {
    font: 700 17px "Liberation Sans", sans-serif;
    fill: #fff;
}
.icon-u {
    font: 400 42px "Open Sans", sans-serif;
    fill: #fff;
}
.icon-h1 {
    font: 400 32px "Open Sans", sans-serif;
    fill: #fff;
    text-anchor: middle;
}
.icon-notion {
    font: 700 20px "Liberation Serif", serif;
    fill: #000;
    text-anchor: middle;
}
.icon-png {
    font: 700 7px "Liberation Sans", sans-serif;
    fill: #333;
    text-anchor: middle;
}
.icon-ax {
    font: 400 11px "Liberation Sans", sans-serif;
    fill: #2d7fd3;
    text-anchor: middle;
}
.icon-cal {
    font: 700 16px "Liberation Sans", sans-serif;
    fill: #4d86e8;
    text-anchor: middle;
}
.icon-at {
    font: 400 20px "Liberation Sans", sans-serif;
    fill: #e8eaed;
    text-anchor: middle;
}
.code-text {
    font: 400 31px "Open Sans", sans-serif;
    fill: #fff;
    text-anchor: middle;
}

/* download shelf */
.downloads {
    height: 114px;
    padding-left: 7px;
    background: #35363a;
    border-top: 2px solid #202124;
    display: flex;
    align-items: center;
    color: #e8eaed;
    flex: none;
}
.dl {
    width: 466px;
    height: 88px;
    padding: 0 34px 0 38px;
    border-right: 2px solid #6a6d70;
    display: flex;
    align-items: center;
    flex: none;
}
.dl-file {
    width: 22px;
    height: 30px;
    margin-top: -12px;
    flex: none;
}
.dl-name {
    flex: 1;
    padding: 2px 6px 0 0;
    text-align: center;
    font-size: 28px;
}
.dl-chev {
    margin-top: -10px;
    flex: none;
}
.show-all {
    width: 163px;
    height: 63px;
    margin: -6px 0 0 auto;
    background: #292a2d;
    border: 1px solid #3f4044;
    border-radius: 10px;
    color: #8ab4f8;
    font: 700 24px "Liberation Sans", sans-serif;
}
.dl-close {
    margin: -6px 27px 0 27px;
    flex: none;
}
```
